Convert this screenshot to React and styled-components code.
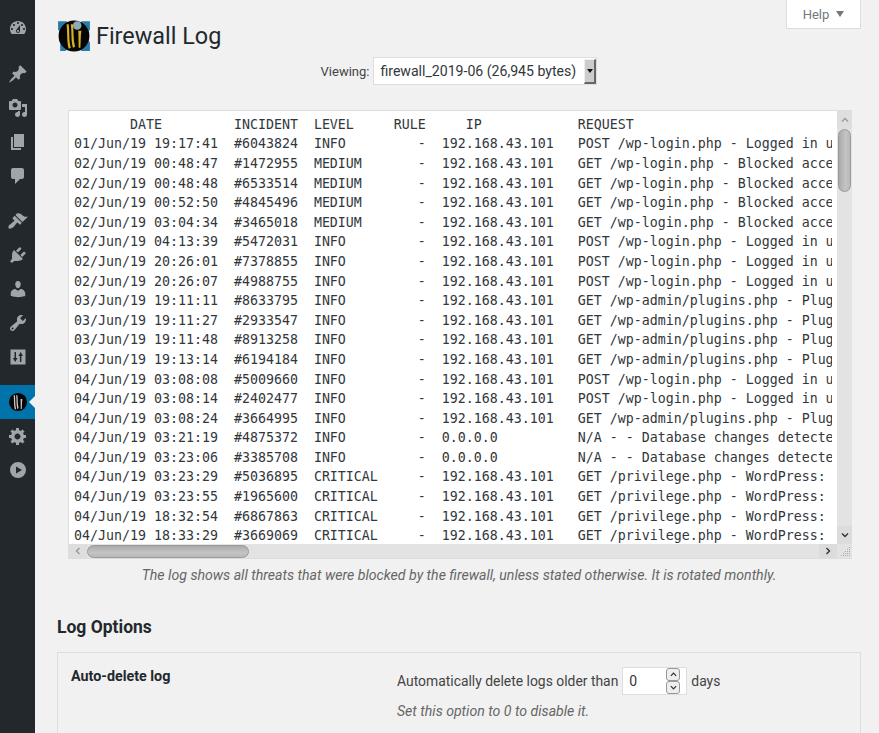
import React from 'react';
import styled, { createGlobalStyle } from 'styled-components';

const Global = createGlobalStyle`
  html, body { margin: 0; padding: 0; background: #f1f1f1; height: 733px; overflow: hidden; }
  body { font-family: Roboto, "Liberation Sans", sans-serif; font-size: 14px; color: #444; }
`;
const Shell = styled.div`display: flex; width: 879px; height: 733px; overflow: hidden;`;
const Sidebar = styled.nav`width: 35px; flex: none; background: #23282d; display: flex; flex-direction: column; padding-top: 11px; box-sizing: border-box;`;
const Gap = styled.div`height: ${p => p.$h}px; flex: none;`;
const MenuItem = styled.div`
  height: 34px; flex: none; display: flex; align-items: center; justify-content: center;
  position: relative; color: #a0a5aa;
  background: ${p => p.$active ? '#0073aa' : 'transparent'};
  ${p => p.$active ? `&::after { content: ""; position: absolute; right: 0; top: 50%; margin-top: -6px; border: 6px solid transparent; border-right-color: #f1f1f1; border-left-width: 0; }` : ''}
`;
const Main = styled.main`flex: 1; min-width: 0; padding: 0 18px 0 22px; position: relative;`;
const HelpTab = styled.div`
  position: absolute; top: 0; right: 18px; width: 75px; height: 29px; box-sizing: border-box;
  background: #fff; border: 1px solid #ddd; border-top: 0; display: flex; align-items: center; justify-content: center; gap: 6px;
  font-size: 13px; color: #72777c;
`;
const Caret = styled.span`width: 0; height: 0; border: 4px solid transparent; border-top: 6px solid #72777c; border-bottom: 0; margin-top: -1px; margin-left: 1px;`;
const TitleRow = styled.header`display: flex; align-items: center; gap: 5px; height: 32px; padding-top: 20px;`;
const Title = styled.h1`margin: 0; font-size: 23.4px; font-weight: 400; color: #23282d; line-height: 32px;`;
const ViewRow = styled.div`display: flex; align-items: center; justify-content: center; gap: 4px; margin-top: 5px; height: 28px;`;
const ViewLabel = styled.label`font-size: 13px; color: #444;`;
const FakeSelect = styled.div`
  width: 224px; height: 28px; box-sizing: border-box; background: #fff; border: 1px solid #ddd; display: flex; align-items: center; justify-content: space-between;
  padding-left: 6px; font-size: 14.1px; color: #32373c;
`;
const SelectBtn = styled.span`
  width: 12px; height: 25px; background: #ccc; border-right: 2px solid #666; border-bottom: 2px solid #666; border-top: 1px solid #eee; border-left: 1px solid #eee;
  box-sizing: border-box; display: flex; align-items: center; justify-content: center;
  &::before { content: ""; border: 3px solid transparent; border-top: 4px solid #111; border-bottom: 0; }
`;
const LogBox = styled.section`
  margin: 25px 6px 0 11px; height: 449px; box-sizing: border-box; background: #e6e6e6; border: 1px solid #ddd; border-right: 0;
  display: grid; grid-template-columns: 1fr 15px; grid-template-rows: 1fr 14px; width: 784px;
`;
const LogView = styled.div`background: #fff; overflow: hidden; padding: 3.8px 5px 0 5px;`;
const LogText = styled.pre`
  margin: 0; font-family: "DejaVu Sans Mono", monospace; font-size: 13.29px; line-height: 19.6px; color: #32373c; overflow: hidden; height: 100%;
`;
const VBar = styled.div`background: #e3e3e3; display: flex; flex-direction: column; align-items: center; position: relative;`;
const VBtn = styled.div`height: 18px; width: 100%; flex: none; background: ${p => p.$dark ? '#dcdcdc' : '#dedede'}; display: flex; align-items: center; justify-content: center; color: ${p => p.$dark ? '#333' : '#999'};`;
const VThumb = styled.div`width: 13px; height: 63px; box-sizing: border-box; border: 1px solid #999; border-radius: 7px; background: linear-gradient(to right, #aaa, #c4c4c4 60%, #b8b8b8);`;
const Spacer = styled.div`flex: 1;`;
const HBar = styled.div`background: #e3e3e3; display: flex; align-items: center;`;
const HBtn = styled.div`width: 18px; height: 14px; flex: none; background: ${p => p.$dark ? '#dcdcdc' : '#dedede'}; display: flex; align-items: center; justify-content: center; color: ${p => p.$dark ? '#333' : '#999'};`;
const HThumb = styled.div`width: 162px; height: 13px; box-sizing: border-box; border: 1px solid #999; border-radius: 7px; background: linear-gradient(to bottom, #aaa, #c4c4c4 60%, #b8b8b8);`;
const Corner = styled.div`background: #e3e3e3; display: flex; align-items: flex-end; justify-content: flex-end;`;
const Caption = styled.p`margin: 6px 0 0; text-align: center; font-style: italic; font-size: 14.13px; color: #666; line-height: 20px; padding-left: 6px; padding-right: 6px;`;
const SectionTitle = styled.h2`margin: 31px 0 0; font-size: 17.5px; font-weight: 700; color: #23282d; line-height: 22px;`;
const Panel = styled.section`margin-top: 14px; box-sizing: border-box; width: 804px; height: 120px; border: 1px solid #ddd; display: grid; grid-template-columns: 326px 1fr; padding: 13px 13px;`;
const OptLabel = styled.div`font-size: 14.3px; font-weight: 700; color: #23282d; line-height: 20px;`;
const OptBody = styled.div`display: flex; flex-direction: column; padding-top: 1px;`;
const OptRow = styled.div`display: flex; align-items: center; gap: 4px; height: 28px; font-size: 13.9px; color: #444;`;
const NumInput = styled.div`width: 65px; height: 28px; box-sizing: border-box; background: #fff; border: 1px solid #ddd; display: flex; align-items: center; justify-content: space-between; padding: 0 6px 0 6px; color: #32373c; font-size: 14px;`;
const Spin = styled.div`display: flex; flex-direction: column; width: 14px;`;
const SpinBtn = styled.div`height: 13px; box-sizing: border-box; border: 1px solid #999; border-radius: 3px; background: #eee; display: flex; align-items: center; justify-content: center; color: #333;`;
const Hint = styled.p`margin: 6px 0 0; font-style: italic; font-size: 14.1px; color: #666; line-height: 20px;`;

const Chev = ({ d, size = 8 }) => (
  <svg width={size} height={size} viewBox="0 0 8 8" fill="none" stroke="currentColor" strokeWidth="1.4"><path d={d} /></svg>
);

const UP = 'M1 5.5 4 2.5 7 5.5', DOWN = 'M1 2.5 4 5.5 7 2.5', LEFT = 'M5.5 1 2.5 4 5.5 7', RIGHT = 'M2.5 1 5.5 4 2.5 7';

const Ico = ({ d, rule }) => (
  <svg width="20" height="20" viewBox="0 0 20 20" fill="currentColor"><path d={d} fillRule={rule} /></svg>
);

const Shield = ({ size, bolts }) => (
  <svg width={size} height={size} viewBox="0 0 32 32">
    {bolts && <path d="M1 2h8l1 2h12l1-2h8v8l-1 1v10l1 1v8h-8l-1-1H9l-1 1H3v-8l-1-1V11l-1-1z" fill="#2a7ba8" />}
    <circle cx="16" cy="16" r="14.5" fill="#060606" />
    {bolts && <circle cx="19" cy="6" r="4" fill="#8fa9b5" />}
    <path d="M9 5c1 8 0 16 2 23l2-1c-2-7-1-15-2-22zM13 5c1 8 0 15 2 22l2-1c-2-7-1-14-2-21z" fill={bolts ? '#d8b21e' : '#ccc'} />
    <path d="M20 11h3l-.5 4-.5 12h-1.6l-.2-12z" fill={bolts ? '#d8b21e' : '#ccc'} />
  </svg>
);

const icons = {
  dashboard: 'M3.76 16h12.48c1.1-1.37 1.76-3.11 1.76-5 0-4.42-3.58-8-8-8s-8 3.58-8 8c0 1.89.66 3.63 1.76 5zM10 4c.55 0 1 .45 1 1s-.45 1-1 1-1-.45-1-1 .45-1 1-1zM6 6c.55 0 1 .45 1 1s-.45 1-1 1-1-.45-1-1 .45-1 1-1zm8 0c.55 0 1 .45 1 1s-.45 1-1 1-1-.45-1-1 .45-1 1-1zm-5.37 5.55L12 7v6c0 1.1-.9 2-2 2s-2-.9-2-2c0-.57.24-1.08.63-1.45zM4 10c.55 0 1 .45 1 1s-.45 1-1 1-1-.45-1-1 .45-1 1-1zm12 0c.55 0 1 .45 1 1s-.45 1-1 1-1-.45-1-1 .45-1 1-1zm-5 3c0-.55-.45-1-1-1s-1 .45-1 1 .45 1 1 1 1-.45 1-1z',
  post: 'M10.44 3.02l1.82-1.82 6.36 6.35-1.83 1.82c-1.05-.68-2.48-.57-3.41.36l-.75.75c-.92.93-1.04 2.35-.35 3.41l-1.83 1.82-2.41-2.41-2.8 2.79c-.42.42-3.38 2.71-3.8 2.29s1.86-3.39 2.28-3.81l2.79-2.79L4.1 9.36l1.83-1.82c1.05.69 2.48.57 3.4-.36l.75-.75c.93-.92 1.05-2.35.36-3.41z',
  media: 'M13 11V4c0-.55-.45-1-1-1h-1.67L9 1H5L3.67 3H2c-.55 0-1 .45-1 1v7c0 .55.45 1 1 1h10c.55 0 1-.45 1-1zM7 4.5c1.38 0 2.5 1.12 2.5 2.5S8.38 9.5 7 9.5 4.5 8.38 4.5 7 5.62 4.5 7 4.5zM14 6h5v10.5c0 1.38-1.12 2.5-2.5 2.5S14 17.88 14 16.5s1.12-2.5 2.5-2.5c.17 0 .34.02.5.05V9h-3V6zm-4 8.05V13h2v3.5c0 1.38-1.12 2.5-2.5 2.5S7 17.88 7 16.5 8.12 14 9.5 14c.17 0 .34.02.5.05z',
  page: 'M6 15V2h10v13H6zm-1 1h8v2H3V5h2v11z',
  comments: 'M5 2h9c1.1 0 2 .9 2 2v7c0 1.1-.9 2-2 2h-2l-5 5v-5H5c-1.1 0-2-.9-2-2V4c0-1.1.9-2 2-2z',
  appearance: 'M14.48 11.06L7.41 3.99l1.5-1.5c.5-.56 2.3-.47 3.51.32 1.21.8 1.43 1.28 2.91 2.1 1.18.64 2.45 1.26 4.68.75l-5.53 5.4zm-.71.71L6.7 4.7 4.93 6.47c-.39.39-.39 1.02 0 1.41l1.06 1.06c.39.39.39 1.03 0 1.42-.6.6-1.43 1.11-2.21 1.69-.35.26-.7.53-1.01.84C1.43 13.23.4 14.8.4 16.37c0 .8.52 1.32 1.31 1.32 1.58 0 3.15-1.03 4.5-2.37.31-.31.58-.66.84-1.01.58-.78 1.09-1.61 1.69-2.21.39-.39 1.03-.39 1.42 0l1.06 1.06c.39.39 1.02.39 1.41 0z',
  plugins: 'M13.11 4.36L9.87 7.6 8 5.73l3.24-3.24c.35-.34 1.05-.2 1.56.32.52.51.66 1.21.31 1.55zm-8 1.77l.91-1.12 9.01 9.01-1.19.84c-.71.71-2.63 1.16-3.82 1.16H6.14L4.9 17.26c-.59.59-1.54.59-2.12 0-.59-.58-.59-1.53 0-2.12l1.24-1.24v-3.88c0-1.13.4-3.19 1.09-3.89zm7.26 3.97l3.24-3.24c.34-.35 1.04-.21 1.55.31.52.51.66 1.21.31 1.55l-3.24 3.25z',
  users: 'M10 9.25c-2.27 0-2.73-3.44-2.73-3.44C7 4.02 7.82 2 9.97 2c2.16 0 2.98 2.02 2.71 3.81 0 0-.41 3.44-2.68 3.44zm0 2.57L12.72 10c2.39 0 4.52 2.33 4.52 4.53v2.49s-3.65 1.13-7.24 1.13c-3.65 0-7.24-1.13-7.24-1.13v-2.49c0-2.25 1.94-4.48 4.47-4.48z',
  tools: 'M16.68 9.77c-1.34 1.34-3.3 1.67-4.95.99l-5.41 6.52c-.99.99-2.59.99-3.58 0s-.99-2.59 0-3.57l6.52-5.42c-.68-1.65-.35-3.61.99-4.95 1.28-1.28 3.12-1.62 4.72-1.06l-2.89 2.89 2.82 2.82 2.86-2.87c.53 1.58.18 3.39-1.08 4.65zM3.81 16.21c.4.39 1.04.39 1.43 0 .4-.4.4-1.04 0-1.43-.39-.4-1.03-.4-1.43 0-.39.39-.39 1.03 0 1.43z',
  sliders: 'M2.5 2.5h15v15h-15zM6.5 5v6H4.8L7.2 15 9.5 11H8V5zM11.9 15h1.5V9H15l-2.3-4L10.4 9h1.5z',
  gear: 'M18 12h-2.18c-.17.7-.44 1.35-.81 1.93l1.54 1.54-2.1 2.1-1.54-1.54c-.58.36-1.23.63-1.91.79V19H8v-2.18c-.68-.16-1.33-.43-1.91-.79l-1.54 1.54-2.12-2.12 1.54-1.54c-.36-.58-.63-1.23-.79-1.91H1V9.03h2.17c.16-.7.44-1.36.8-1.94L2.43 5.55l2.1-2.1 1.54 1.54c.58-.37 1.24-.64 1.93-.81V2h3v2.18c.68.16 1.33.43 1.91.79l1.54-1.54 2.12 2.12-1.54 1.54c.36.59.64 1.24.8 1.94H18V12zm-8.5 1.5c1.66 0 3-1.34 3-3s-1.34-3-3-3-3 1.34-3 3 1.34 3 3 3z',
  play: 'M10 2a8 8 0 1 0 0 16 8 8 0 0 0 0-16zM8 6.5l6 3.5-6 3.5z',
};

const rows = [
  ['01/Jun/19 19:17:41','6043824','INFO','192.168.43.101','POST /wp-login.php - Logged in user'],
  ['02/Jun/19 00:48:47','1472955','MEDIUM','192.168.43.101','GET /wp-login.php - Blocked access'],
  ['02/Jun/19 00:48:48','6533514','MEDIUM','192.168.43.101','GET /wp-login.php - Blocked access'],
  ['02/Jun/19 00:52:50','4845496','MEDIUM','192.168.43.101','GET /wp-login.php - Blocked access'],
  ['02/Jun/19 03:04:34','3465018','MEDIUM','192.168.43.101','GET /wp-login.php - Blocked access'],
  ['02/Jun/19 04:13:39','5472031','INFO','192.168.43.101','POST /wp-login.php - Logged in user'],
  ['02/Jun/19 20:26:01','7378855','INFO','192.168.43.101','POST /wp-login.php - Logged in user'],
  ['02/Jun/19 20:26:07','4988755','INFO','192.168.43.101','POST /wp-login.php - Logged in user'],
  ['03/Jun/19 19:11:11','8633795','INFO','192.168.43.101','GET /wp-admin/plugins.php - Plugin'],
  ['03/Jun/19 19:11:27','2933547','INFO','192.168.43.101','GET /wp-admin/plugins.php - Plugin'],
  ['03/Jun/19 19:11:48','8913258','INFO','192.168.43.101','GET /wp-admin/plugins.php - Plugin'],
  ['03/Jun/19 19:13:14','6194184','INFO','192.168.43.101','GET /wp-admin/plugins.php - Plugin'],
  ['04/Jun/19 03:08:08','5009660','INFO','192.168.43.101','POST /wp-login.php - Logged in user'],
  ['04/Jun/19 03:08:14','2402477','INFO','192.168.43.101','POST /wp-login.php - Logged in user'],
  ['04/Jun/19 03:08:24','3664995','INFO','192.168.43.101','GET /wp-admin/plugins.php - Plugin'],
  ['04/Jun/19 03:21:19','4875372','INFO','0.0.0.0','N/A - - Database changes detected'],
  ['04/Jun/19 03:23:06','3385708','INFO','0.0.0.0','N/A - - Database changes detected'],
  ['04/Jun/19 03:23:29','5036895','CRITICAL','192.168.43.101','GET /privilege.php - WordPress: user'],
  ['04/Jun/19 03:23:55','1965600','CRITICAL','192.168.43.101','GET /privilege.php - WordPress: user'],
  ['04/Jun/19 18:32:54','6867863','CRITICAL','192.168.43.101','GET /privilege.php - WordPress: user'],
  ['04/Jun/19 18:33:29','3669069','CRITICAL','192.168.43.101','GET /privilege.php - WordPress: user'],
];
const header = ' '.repeat(7) + 'DATE' + ' '.repeat(9) + 'INCIDENT  LEVEL     RULE     IP' + ' '.repeat(12) + 'REQUEST';
const log = [header, ...rows.map(r => `${r[0]}  #${r[1]}  ${r[2].padEnd(13)}-  ${r[3].padEnd(17)}${r[4]}`)].join('\n');

export default function App() {
  return (
    <Shell>
      <Global />
      <Sidebar>
        <MenuItem><Ico d={icons.dashboard} /></MenuItem>
        <Gap $h={12} />
        <MenuItem><Ico d={icons.post} /></MenuItem>
        <MenuItem><Ico d={icons.media} /></MenuItem>
        <MenuItem><Ico d={icons.page} /></MenuItem>
        <MenuItem><Ico d={icons.comments} /></MenuItem>
        <Gap $h={11} />
        <MenuItem><Ico d={icons.appearance} /></MenuItem>
        <MenuItem><Ico d={icons.plugins} /></MenuItem>
        <MenuItem><Ico d={icons.users} /></MenuItem>
        <MenuItem><Ico d={icons.tools} /></MenuItem>
        <MenuItem><Ico d={icons.sliders} rule="evenodd" /></MenuItem>
        <Gap $h={11} />
        <MenuItem $active><Shield size={20} /></MenuItem>
        <MenuItem><Ico d={icons.gear} /></MenuItem>
        <MenuItem><Ico d={icons.play} rule="evenodd" /></MenuItem>
      </Sidebar>
      <Main>
        <HelpTab>Help<Caret /></HelpTab>
        <TitleRow>
          <Shield size={34} bolts />
          <Title>Firewall Log</Title>
        </TitleRow>
        <ViewRow>
          <ViewLabel>Viewing:</ViewLabel>
          <FakeSelect>firewall_2019-06 (26,945 bytes)<SelectBtn /></FakeSelect>
        </ViewRow>
        <LogBox>
          <LogView><LogText>{log}</LogText></LogView>
          <VBar>
            <VBtn><Chev d={UP} /></VBtn>
            <VThumb />
            <Spacer />
            <VBtn $dark><Chev d={DOWN} /></VBtn>
          </VBar>
          <HBar>
            <HBtn><Chev d={LEFT} /></HBtn>
            <HThumb />
            <Spacer />
            <HBtn $dark><Chev d={RIGHT} /></HBtn>
          </HBar>
          <Corner>
            <svg width="12" height="12" viewBox="0 0 12 12" fill="#aaa">
              {[[9,1],[7,3],[9,3],[5,5],[7,5],[9,5],[3,7],[5,7],[7,7],[9,7],[1,9],[3,9],[5,9],[7,9],[9,9]].map(([x,y]) => <rect key={x+'-'+y} x={x} y={y} width="1" height="1" />)}
            </svg>
          </Corner>
        </LogBox>
        <Caption>The log shows all threats that were blocked by the firewall, unless stated otherwise. It is rotated monthly.</Caption>
        <SectionTitle>Log Options</SectionTitle>
        <Panel>
          <OptLabel>Auto-delete log</OptLabel>
          <OptBody>
            <OptRow>
              Automatically delete logs older than
              <NumInput>0<Spin><SpinBtn><Chev d={UP} size={7} /></SpinBtn><SpinBtn><Chev d={DOWN} size={7} /></SpinBtn></Spin></NumInput>
              days
            </OptRow>
            <Hint>Set this option to 0 to disable it.</Hint>
          </OptBody>
        </Panel>
      </Main>
    </Shell>
  );
}
